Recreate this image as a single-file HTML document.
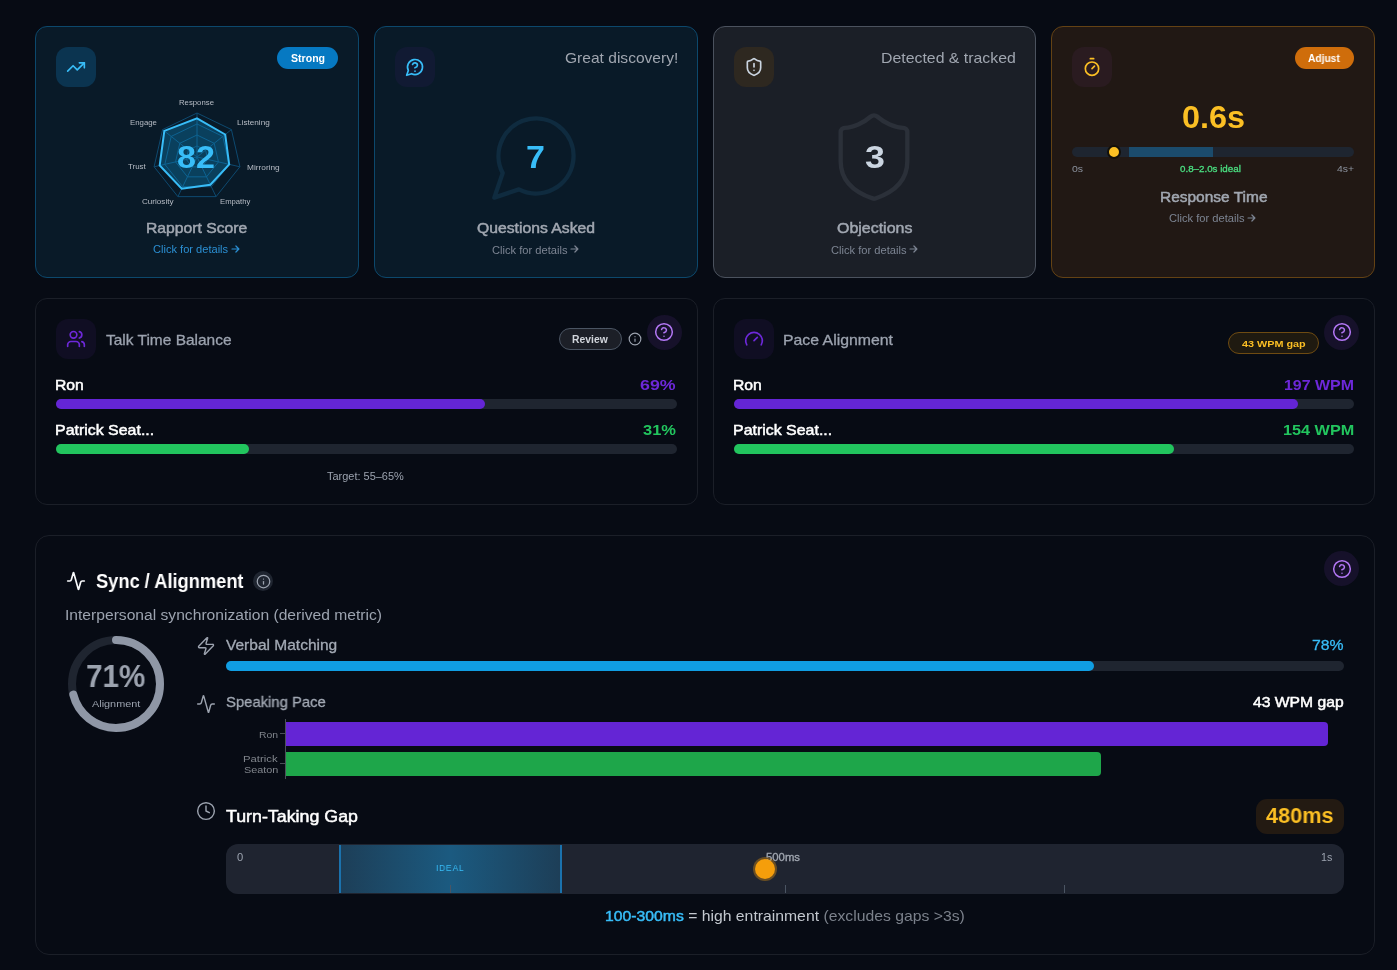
<!DOCTYPE html>
<html><head><meta charset="utf-8"><style>
html,body{margin:0;padding:0;background:#070b14;}
body{width:1397px;height:970px;overflow:hidden;background:#070b14;font-family:"Liberation Sans", sans-serif;position:relative;}
</style></head><body>
<div style="position:absolute;left:35px;top:26px;width:324px;height:252px;box-sizing:border-box;background:#091a28;border:1px solid #0c486c;border-radius:12px;"></div>
<div style="position:absolute;left:374px;top:26px;width:324px;height:252px;box-sizing:border-box;background:#091a28;border:1px solid #0c486c;border-radius:12px;"></div>
<div style="position:absolute;left:713px;top:26px;width:323px;height:252px;box-sizing:border-box;background:#1b1f27;border:1px solid #4b525e;border-radius:12px;"></div>
<div style="position:absolute;left:1051px;top:26px;width:324px;height:252px;box-sizing:border-box;background:#211814;border:1px solid #644214;border-radius:12px;"></div>
<div style="position:absolute;left:56px;top:47px;width:40px;height:40px;background:#0b3450;border-radius:12px;"></div>
<svg style="position:absolute;left:66.0px;top:57.0px;" width="20" height="20" viewBox="0 0 24 24" fill="none" stroke="#38bdf8" stroke-width="2" stroke-linecap="round" stroke-linejoin="round"><polyline points="22 7 13.5 15.5 8.5 10.5 2 17"/><polyline points="16 7 22 7 22 13"/></svg>
<div style="position:absolute;left:395px;top:47px;width:40px;height:40px;background:#111a33;border-radius:12px;"></div>
<svg style="position:absolute;left:405.0px;top:57.0px;" width="20" height="20" viewBox="0 0 24 24" fill="none" stroke="#38bdf8" stroke-width="2" stroke-linecap="round" stroke-linejoin="round"><path d="M7.9 20A9 9 0 1 0 4 16.1L2 22Z"/><path d="M9.09 9a3 3 0 0 1 5.83 1c0 2-3 3-3 3"/><path d="M12 17h.01"/></svg>
<div style="position:absolute;left:734px;top:47px;width:40px;height:40px;background:#2e2820;border-radius:12px;"></div>
<svg style="position:absolute;left:744.0px;top:57.0px;" width="20" height="20" viewBox="0 0 24 24" fill="none" stroke="#cbd5e1" stroke-width="2" stroke-linecap="round" stroke-linejoin="round"><path d="M20 13c0 5-3.5 7.5-7.66 8.95a1 1 0 0 1-.67-.01C7.5 20.5 4 18 4 13V6a1 1 0 0 1 1-1c2 0 4.5-1.2 6.24-2.72a1.17 1.17 0 0 1 1.52 0C14.51 3.81 17 5 19 5a1 1 0 0 1 1 1z"/><path d="M12 8v4"/><path d="M12 16h.01"/></svg>
<div style="position:absolute;left:1072px;top:47px;width:40px;height:40px;background:#2a1b20;border-radius:12px;"></div>
<svg style="position:absolute;left:1082.0px;top:57.0px;" width="20" height="20" viewBox="0 0 24 24" fill="none" stroke="#fbbf24" stroke-width="2" stroke-linecap="round" stroke-linejoin="round"><line x1="10" x2="14" y1="2" y2="2"/><line x1="12" x2="15" y1="14" y2="11"/><circle cx="12" cy="14" r="8"/></svg>
<div style="position:absolute;left:277px;top:47px;width:61px;height:22px;background:#0679c2;border-radius:11px;"></div>
<div class="t" style="position:absolute;left:290.50px;top:53.11px;font-size:10.5px;line-height:10.5px;font-weight:700;color:#ffffff;white-space:nowrap;will-change:transform;transform:scaleX(1.0064);transform-origin:left center;"><span id="t_strong">Strong</span></div>
<div style="position:absolute;left:1295px;top:47px;width:59px;height:22px;background:#cf6d0b;border-radius:11px;"></div>
<div class="t" style="position:absolute;left:1307.87px;top:53.28px;font-size:10.5px;line-height:10.5px;font-weight:700;color:#ffffff;white-space:nowrap;will-change:transform;transform:scaleX(0.9738);transform-origin:left center;"><span id="t_adjust">Adjust</span></div>
<svg style="position:absolute;left:0;top:0" width="1397" height="970"><polygon points="197.00,146.00 205.60,150.14 207.72,159.45 201.77,166.91 192.23,166.91 186.28,159.45 188.40,150.14" fill="none" stroke="#0e4a70" stroke-width="1"/><polygon points="197.00,135.00 214.20,143.28 218.45,161.90 206.55,176.82 187.45,176.82 175.55,161.90 179.80,143.28" fill="none" stroke="#0e4a70" stroke-width="1"/><polygon points="197.00,124.00 222.80,136.42 229.17,164.34 211.32,186.73 182.68,186.73 164.83,164.34 171.20,136.42" fill="none" stroke="#0e4a70" stroke-width="1"/><polygon points="197.00,113.00 231.40,129.57 239.90,166.79 216.09,196.64 177.91,196.64 154.10,166.79 162.60,129.57" fill="none" stroke="#0e4a70" stroke-width="1"/><line x1="197" y1="157" x2="197.00" y2="113.00" stroke="#0e4a70" stroke-width="1"/><line x1="197" y1="157" x2="231.40" y2="129.57" stroke="#0e4a70" stroke-width="1"/><line x1="197" y1="157" x2="239.90" y2="166.79" stroke="#0e4a70" stroke-width="1"/><line x1="197" y1="157" x2="216.09" y2="196.64" stroke="#0e4a70" stroke-width="1"/><line x1="197" y1="157" x2="177.91" y2="196.64" stroke="#0e4a70" stroke-width="1"/><line x1="197" y1="157" x2="154.10" y2="166.79" stroke="#0e4a70" stroke-width="1"/><line x1="197" y1="157" x2="162.60" y2="129.57" stroke="#0e4a70" stroke-width="1"/><polygon points="197.00,118.28 225.21,134.50 229.17,164.34 210.36,184.75 181.73,188.71 159.68,165.52 164.32,130.94" fill="rgba(14,165,233,0.28)" stroke="#38bdf8" stroke-width="2"/></svg>
<div class="t" style="position:absolute;left:179.28px;top:99.19px;font-size:7px;line-height:7px;font-weight:400;color:#b7bcc5;white-space:nowrap;will-change:transform;transform:scaleX(1.1086);transform-origin:left center;"><span id="r_resp">Response</span></div>
<div class="t" style="position:absolute;left:237.31px;top:119.45px;font-size:7px;line-height:7px;font-weight:400;color:#b7bcc5;white-space:nowrap;will-change:transform;transform:scaleX(1.1706);transform-origin:left center;"><span id="r_list">Listening</span></div>
<div class="t" style="position:absolute;left:129.74px;top:119.28px;font-size:7px;line-height:7px;font-weight:400;color:#b7bcc5;white-space:nowrap;will-change:transform;transform:scaleX(1.1173);transform-origin:left center;"><span id="r_eng">Engage</span></div>
<div class="t" style="position:absolute;left:247.15px;top:163.53px;font-size:7px;line-height:7px;font-weight:400;color:#b7bcc5;white-space:nowrap;will-change:transform;transform:scaleX(1.1844);transform-origin:left center;"><span id="r_mirr">Mirroring</span></div>
<div class="t" style="position:absolute;left:128.08px;top:163.34px;font-size:7px;line-height:7px;font-weight:400;color:#b7bcc5;white-space:nowrap;will-change:transform;transform:scaleX(1.1290);transform-origin:left center;"><span id="r_trust">Trust</span></div>
<div class="t" style="position:absolute;left:142.44px;top:198.02px;font-size:7px;line-height:7px;font-weight:400;color:#b7bcc5;white-space:nowrap;will-change:transform;transform:scaleX(1.1563);transform-origin:left center;"><span id="r_cur">Curiosity</span></div>
<div class="t" style="position:absolute;left:219.55px;top:197.89px;font-size:7px;line-height:7px;font-weight:400;color:#b7bcc5;white-space:nowrap;will-change:transform;transform:scaleX(1.0978);transform-origin:left center;"><span id="r_emp">Empathy</span></div>
<div class="t" style="position:absolute;left:177.35px;top:140.91px;font-size:32px;line-height:32px;font-weight:700;color:#38bdf8;white-space:nowrap;will-change:transform;transform:scaleX(1.0665);transform-origin:left center;"><span id="n82">82</span></div>
<div class="t" style="position:absolute;left:146.08px;top:219.76px;font-size:15px;line-height:15px;font-weight:400;color:#a1a7b1;white-space:nowrap;will-change:transform;-webkit-text-stroke-width:0.5px;transform:scaleX(1.0475);transform-origin:left center;"><span id="t_rapport">Rapport Score</span></div>
<div class="t" style="position:absolute;left:153.03px;top:244.56px;font-size:10px;line-height:10px;font-weight:400;color:#2b8fd3;white-space:nowrap;will-change:transform;transform:scaleX(1.1080);transform-origin:left center;"><span id="t_click1">Click for details</span></div>
<svg style="position:absolute;left:231px;top:244.1px" width="9.3" height="10" viewBox="0 0 9.3 10" fill="none" stroke="#2b8fd3" stroke-width="1.2" stroke-linecap="round" stroke-linejoin="round"><path d="M1 5H7.8999999999999995M4.8999999999999995 2L7.8999999999999995 5L4.8999999999999995 8"/></svg>
<svg style="position:absolute;left:485.79999999999995px;top:106.1px;" width="100" height="100" viewBox="0 0 24 24" fill="none" stroke="#0f2b3f" stroke-width="1.05" stroke-linecap="round" stroke-linejoin="round"><path d="M7.9 20A9 9 0 1 0 4 16.1L2 22Z"/></svg>
<div class="t" style="position:absolute;left:564.57px;top:50.00px;font-size:15px;line-height:15px;font-weight:400;color:#a0a6b0;white-space:nowrap;will-change:transform;transform:scaleX(1.0375);transform-origin:left center;"><span id="t_great">Great discovery!</span></div>
<div class="t" style="position:absolute;left:526.09px;top:140.91px;font-size:32px;line-height:32px;font-weight:700;color:#38bdf8;white-space:nowrap;will-change:transform;transform:scaleX(1.0631);transform-origin:left center;"><span id="n7">7</span></div>
<div class="t" style="position:absolute;left:476.70px;top:219.97px;font-size:15px;line-height:15px;font-weight:400;color:#a1a7b1;white-space:nowrap;will-change:transform;-webkit-text-stroke-width:0.5px;transform:scaleX(1.0486);transform-origin:left center;"><span id="t_quest">Questions Asked</span></div>
<div class="t" style="position:absolute;left:492.19px;top:245.52px;font-size:10px;line-height:10px;font-weight:400;color:#7d8593;white-space:nowrap;will-change:transform;transform:scaleX(1.1130);transform-origin:left center;"><span id="t_click2">Click for details</span></div>
<svg style="position:absolute;left:569.9px;top:244.3px" width="9.3" height="10" viewBox="0 0 9.3 10" fill="none" stroke="#7d8593" stroke-width="1.2" stroke-linecap="round" stroke-linejoin="round"><path d="M1 5H7.8999999999999995M4.8999999999999995 2L7.8999999999999995 5L4.8999999999999995 8"/></svg>
<svg style="position:absolute;left:824.0px;top:107.0px;" width="100" height="100" viewBox="0 0 24 24" fill="none" stroke="#2b3039" stroke-width="1.05" stroke-linecap="round" stroke-linejoin="round"><path d="M20 13c0 5-3.5 7.5-7.66 8.95a1 1 0 0 1-.67-.01C7.5 20.5 4 18 4 13V6a1 1 0 0 1 1-1c2 0 4.5-1.2 6.24-2.72a1.17 1.17 0 0 1 1.52 0C14.51 3.81 17 5 19 5a1 1 0 0 1 1 1z"/></svg>
<div class="t" style="position:absolute;left:881.12px;top:50.00px;font-size:15px;line-height:15px;font-weight:400;color:#a0a6b0;white-space:nowrap;will-change:transform;transform:scaleX(1.0568);transform-origin:left center;"><span id="t_detect">Detected &amp; tracked</span></div>
<div class="t" style="position:absolute;left:864.58px;top:140.96px;font-size:32px;line-height:32px;font-weight:700;color:#cbd5e1;white-space:nowrap;will-change:transform;transform:scaleX(1.1180);transform-origin:left center;"><span id="n3">3</span></div>
<div class="t" style="position:absolute;left:836.62px;top:219.85px;font-size:15px;line-height:15px;font-weight:400;color:#a1a7b1;white-space:nowrap;will-change:transform;-webkit-text-stroke-width:0.5px;transform:scaleX(1.0638);transform-origin:left center;"><span id="t_obj">Objections</span></div>
<div class="t" style="position:absolute;left:830.66px;top:245.52px;font-size:10px;line-height:10px;font-weight:400;color:#7d8593;white-space:nowrap;will-change:transform;transform:scaleX(1.1128);transform-origin:left center;"><span id="t_click3">Click for details</span></div>
<svg style="position:absolute;left:908.5px;top:244.3px" width="9.3" height="10" viewBox="0 0 9.3 10" fill="none" stroke="#7d8593" stroke-width="1.2" stroke-linecap="round" stroke-linejoin="round"><path d="M1 5H7.8999999999999995M4.8999999999999995 2L7.8999999999999995 5L4.8999999999999995 8"/></svg>
<div class="t" style="position:absolute;left:1182.19px;top:100.81px;font-size:32px;line-height:32px;font-weight:700;color:#fbbf24;white-space:nowrap;will-change:transform;transform:scaleX(1.0132);transform-origin:left center;"><span id="n06">0.6s</span></div>
<div style="position:absolute;left:1072px;top:147px;width:282px;height:10px;background:#1e2530;border-radius:5px;"></div>
<div style="position:absolute;left:1128.5px;top:147px;width:84.5px;height:10px;background:#1b4b6c;"></div>
<div style="position:absolute;left:1107.4px;top:145px;width:14px;height:14px;box-sizing:border-box;background:#fbbf24;border:2px solid #120f0a;border-radius:50%;"></div>
<div class="t" style="position:absolute;left:1071.85px;top:164.72px;font-size:9px;line-height:9px;font-weight:400;color:#8b929e;white-space:nowrap;will-change:transform;transform:scaleX(1.1680);transform-origin:left center;"><span id="t_0s">0s</span></div>
<div class="t" style="position:absolute;left:1180.23px;top:164.82px;font-size:9px;line-height:9px;font-weight:400;color:#4ade80;white-space:nowrap;will-change:transform;-webkit-text-stroke-width:0.3px;transform:scaleX(1.0852);transform-origin:left center;"><span id="t_ideal">0.8–2.0s ideal</span></div>
<div class="t" style="position:absolute;left:1337.08px;top:164.64px;font-size:9px;line-height:9px;font-weight:400;color:#8b929e;white-space:nowrap;will-change:transform;transform:scaleX(1.1576);transform-origin:left center;"><span id="t_4s">4s+</span></div>
<div class="t" style="position:absolute;left:1159.51px;top:188.76px;font-size:15px;line-height:15px;font-weight:400;color:#a1a7b1;white-space:nowrap;will-change:transform;-webkit-text-stroke-width:0.5px;transform:scaleX(1.0315);transform-origin:left center;"><span id="t_resp">Response Time</span></div>
<div class="t" style="position:absolute;left:1169.01px;top:213.82px;font-size:10px;line-height:10px;font-weight:400;color:#7d8593;white-space:nowrap;will-change:transform;transform:scaleX(1.1130);transform-origin:left center;"><span id="t_click4">Click for details</span></div>
<svg style="position:absolute;left:1247.4px;top:212.5px" width="9.3" height="10" viewBox="0 0 9.3 10" fill="none" stroke="#7d8593" stroke-width="1.2" stroke-linecap="round" stroke-linejoin="round"><path d="M1 5H7.8999999999999995M4.8999999999999995 2L7.8999999999999995 5L4.8999999999999995 8"/></svg>
<div style="position:absolute;left:35px;top:298px;width:663px;height:207px;box-sizing:border-box;background:#070b14;border:1px solid #1b1f28;border-radius:12px;"></div>
<div style="position:absolute;left:713px;top:298px;width:662px;height:207px;box-sizing:border-box;background:#070b14;border:1px solid #1b1f28;border-radius:12px;"></div>
<div style="position:absolute;left:56px;top:319px;width:40px;height:40px;background:#100e23;border-radius:12px;"></div>
<svg style="position:absolute;left:66.0px;top:329.0px;" width="20" height="20" viewBox="0 0 24 24" fill="none" stroke="#6d28d9" stroke-width="2" stroke-linecap="round" stroke-linejoin="round"><path d="M16 21v-2a4 4 0 0 0-4-4H6a4 4 0 0 0-4 4v2"/><circle cx="9" cy="7" r="4"/><path d="M22 21v-2a4 4 0 0 0-3-3.87"/><path d="M16 3.13a4 4 0 0 1 0 7.75"/></svg>
<div class="t" style="position:absolute;left:106.44px;top:332.05px;font-size:15px;line-height:15px;font-weight:400;color:#9ca3af;white-space:nowrap;will-change:transform;-webkit-text-stroke-width:0.3px;transform:scaleX(1.0314);transform-origin:left center;"><span id="t_talk">Talk Time Balance</span></div>
<div style="position:absolute;left:559px;top:328px;width:63px;height:22px;box-sizing:border-box;background:#1c1f27;border:1px solid #4b5563;border-radius:11px;"></div>
<div class="t" style="position:absolute;left:572.04px;top:334.54px;font-size:10px;line-height:10px;font-weight:700;color:#d1d5db;white-space:nowrap;will-change:transform;transform:scaleX(1.0365);transform-origin:left center;"><span id="t_review">Review</span></div>
<svg style="position:absolute;left:627.5px;top:332.0px;" width="14" height="14" viewBox="0 0 24 24" fill="none" stroke="#9ca3af" stroke-width="2" stroke-linecap="round" stroke-linejoin="round"><circle cx="12" cy="12" r="10"/><path d="M12 16v-4"/><path d="M12 8h.01"/></svg>
<div style="position:absolute;left:646.5px;top:314.5px;width:35px;height:35px;background:#16112a;border-radius:50%;"></div>
<svg style="position:absolute;left:654.0px;top:322.0px;" width="20" height="20" viewBox="0 0 24 24" fill="none" stroke="#b377f5" stroke-width="1.8" stroke-linecap="round" stroke-linejoin="round"><circle cx="12" cy="12" r="10"/><path d="M9.09 9a3 3 0 0 1 5.83 1c0 2-3 3-3 3"/><path d="M12 17h.01"/></svg>
<div class="t" style="position:absolute;left:55.34px;top:377.70px;font-size:14.5px;line-height:14.5px;font-weight:400;color:#ffffff;white-space:nowrap;will-change:transform;-webkit-text-stroke-width:0.5px;transform:scaleX(1.0841);transform-origin:left center;"><span id="t_ron1">Ron</span></div>
<div class="t" style="position:absolute;left:640.36px;top:377.20px;font-size:15px;line-height:15px;font-weight:700;color:#6d28d9;white-space:nowrap;will-change:transform;transform:scaleX(1.1858);transform-origin:left center;"><span id="t_69">69%</span></div>
<div style="position:absolute;left:56px;top:399px;width:621px;height:10px;background:#1f2530;border-radius:5px;"></div>
<div style="position:absolute;left:56px;top:399px;width:428.5px;height:10px;background:#6425d5;border-radius:5px;"></div>
<div class="t" style="position:absolute;left:55.31px;top:423.10px;font-size:14.5px;line-height:14.5px;font-weight:400;color:#ffffff;white-space:nowrap;will-change:transform;-webkit-text-stroke-width:0.5px;transform:scaleX(1.0989);transform-origin:left center;"><span id="t_pat1">Patrick Seat...</span></div>
<div class="t" style="position:absolute;left:642.59px;top:422.30px;font-size:15px;line-height:15px;font-weight:700;color:#22c55e;white-space:nowrap;will-change:transform;transform:scaleX(1.0976);transform-origin:left center;"><span id="t_31">31%</span></div>
<div style="position:absolute;left:56px;top:444px;width:621px;height:10px;background:#1f2530;border-radius:5px;"></div>
<div style="position:absolute;left:56px;top:444px;width:192.5px;height:10px;background:#22c55e;border-radius:5px;"></div>
<div class="t" style="position:absolute;left:327.24px;top:471.84px;font-size:10px;line-height:10px;font-weight:400;color:#9ca3af;white-space:nowrap;will-change:transform;transform:scaleX(1.0966);transform-origin:left center;"><span id="t_target">Target: 55–65%</span></div>
<div style="position:absolute;left:734px;top:319px;width:40px;height:40px;background:#100e23;border-radius:12px;"></div>
<svg style="position:absolute;left:744.0px;top:329.0px;" width="20" height="20" viewBox="0 0 24 24" fill="none" stroke="#6d28d9" stroke-width="2" stroke-linecap="round" stroke-linejoin="round"><path d="m12 14 4-4"/><path d="M3.34 19a10 10 0 1 1 17.32 0"/></svg>
<div class="t" style="position:absolute;left:782.52px;top:332.07px;font-size:15px;line-height:15px;font-weight:400;color:#9ca3af;white-space:nowrap;will-change:transform;-webkit-text-stroke-width:0.3px;transform:scaleX(1.0551);transform-origin:left center;"><span id="t_pace">Pace Alignment</span></div>
<div style="position:absolute;left:1228px;top:332px;width:91px;height:22px;box-sizing:border-box;background:#1f1a10;border:1px solid #6e4b12;border-radius:11px;"></div>
<div class="t" style="position:absolute;left:1242.17px;top:338.70px;font-size:9.8px;line-height:9.8px;font-weight:700;color:#fbbf24;white-space:nowrap;will-change:transform;transform:scaleX(1.1044);transform-origin:left center;"><span id="t_43badge">43 WPM gap</span></div>
<div style="position:absolute;left:1324px;top:314.5px;width:35px;height:35px;background:#16112a;border-radius:50%;"></div>
<svg style="position:absolute;left:1331.5px;top:322.0px;" width="20" height="20" viewBox="0 0 24 24" fill="none" stroke="#b377f5" stroke-width="1.8" stroke-linecap="round" stroke-linejoin="round"><circle cx="12" cy="12" r="10"/><path d="M9.09 9a3 3 0 0 1 5.83 1c0 2-3 3-3 3"/><path d="M12 17h.01"/></svg>
<div class="t" style="position:absolute;left:733.30px;top:377.70px;font-size:14.5px;line-height:14.5px;font-weight:400;color:#ffffff;white-space:nowrap;will-change:transform;-webkit-text-stroke-width:0.5px;transform:scaleX(1.0841);transform-origin:left center;"><span id="t_ron2">Ron</span></div>
<div class="t" style="position:absolute;left:1284.31px;top:377.20px;font-size:15px;line-height:15px;font-weight:700;color:#6d28d9;white-space:nowrap;will-change:transform;transform:scaleX(1.0636);transform-origin:left center;"><span id="t_197">197 WPM</span></div>
<div style="position:absolute;left:734px;top:399px;width:620px;height:10px;background:#1f2530;border-radius:5px;"></div>
<div style="position:absolute;left:734px;top:399px;width:564px;height:10px;background:#6425d5;border-radius:5px;"></div>
<div class="t" style="position:absolute;left:733.31px;top:423.10px;font-size:14.5px;line-height:14.5px;font-weight:400;color:#ffffff;white-space:nowrap;will-change:transform;-webkit-text-stroke-width:0.5px;transform:scaleX(1.0989);transform-origin:left center;"><span id="t_pat2">Patrick Seat...</span></div>
<div class="t" style="position:absolute;left:1283.26px;top:422.30px;font-size:15px;line-height:15px;font-weight:700;color:#22c55e;white-space:nowrap;will-change:transform;transform:scaleX(1.0814);transform-origin:left center;"><span id="t_154">154 WPM</span></div>
<div style="position:absolute;left:734px;top:444px;width:620px;height:10px;background:#1f2530;border-radius:5px;"></div>
<div style="position:absolute;left:734px;top:444px;width:440px;height:10px;background:#22c55e;border-radius:5px;"></div>
<div style="position:absolute;left:35px;top:535px;width:1340px;height:420px;box-sizing:border-box;background:#070b14;border:1px solid #1b1f28;border-radius:14px;"></div>
<svg style="position:absolute;left:66.0px;top:571.0px;" width="20" height="20" viewBox="0 0 24 24" fill="none" stroke="#f9fafb" stroke-width="2" stroke-linecap="round" stroke-linejoin="round"><path d="M22 12h-2.48a2 2 0 0 0-1.93 1.46l-2.35 8.36a.25.25 0 0 1-.48 0L9.24 2.18a.25.25 0 0 0-.48 0l-2.35 8.36A2 2 0 0 1 4.49 12H2"/></svg>
<div class="t" style="position:absolute;left:95.88px;top:571.10px;font-size:20px;line-height:20px;font-weight:700;color:#ffffff;white-space:nowrap;will-change:transform;transform:scaleX(0.9133);transform-origin:left center;"><span id="t_sync">Sync / Alignment</span></div>
<div style="position:absolute;left:253px;top:571px;width:20px;height:20px;background:#1f2530;border-radius:50%;"></div>
<svg style="position:absolute;left:255.8px;top:573.7px;" width="15" height="15" viewBox="0 0 24 24" fill="none" stroke="#9ca3af" stroke-width="2" stroke-linecap="round" stroke-linejoin="round"><circle cx="12" cy="12" r="10"/><path d="M12 16v-4"/><path d="M12 8h.01"/></svg>
<div style="position:absolute;left:1324px;top:551px;width:35px;height:35px;background:#16112a;border-radius:50%;"></div>
<svg style="position:absolute;left:1331.5px;top:558.5px;" width="20" height="20" viewBox="0 0 24 24" fill="none" stroke="#b377f5" stroke-width="1.8" stroke-linecap="round" stroke-linejoin="round"><circle cx="12" cy="12" r="10"/><path d="M9.09 9a3 3 0 0 1 5.83 1c0 2-3 3-3 3"/><path d="M12 17h.01"/></svg>
<div class="t" style="position:absolute;left:64.67px;top:607.98px;font-size:14px;line-height:14px;font-weight:400;color:#9ca3af;white-space:nowrap;will-change:transform;transform:scaleX(1.1162);transform-origin:left center;"><span id="t_inter">Interpersonal synchronization (derived metric)</span></div>
<svg style="position:absolute;left:68.2px;top:635.7px" width="96" height="96" viewBox="0 0 96 96"><circle cx="48" cy="48" r="44" fill="none" stroke="#1f2530" stroke-width="8"/><circle cx="48" cy="48" r="44" fill="none" stroke="#8f97a6" stroke-width="8" stroke-linecap="round" stroke-dasharray="196.29 276.46" transform="rotate(-90 48 48)"/></svg>
<div class="t" style="position:absolute;left:86.08px;top:659.91px;font-size:32px;line-height:32px;font-weight:700;color:#9ca3af;white-space:nowrap;will-change:transform;transform:scaleX(0.9271);transform-origin:left center;"><span id="t_71">71%</span></div>
<div class="t" style="position:absolute;left:92.16px;top:698.85px;font-size:9.5px;line-height:9.5px;font-weight:400;color:#9ca3af;white-space:nowrap;will-change:transform;transform:scaleX(1.1428);transform-origin:left center;"><span id="t_alig">Alignment</span></div>
<svg style="position:absolute;left:196.0px;top:636.0px;" width="20" height="20" viewBox="0 0 24 24" fill="none" stroke="#9ca3af" stroke-width="1.7" stroke-linecap="round" stroke-linejoin="round"><path d="M4 14a1 1 0 0 1-.78-1.63l9.9-10.2a.5.5 0 0 1 .86.46l-1.92 6.02A1 1 0 0 0 13 10h7a1 1 0 0 1 .78 1.63l-9.9 10.2a.5.5 0 0 1-.86-.46l1.92-6.02A1 1 0 0 0 11 14z"/></svg>
<div class="t" style="position:absolute;left:226.19px;top:636.76px;font-size:15px;line-height:15px;font-weight:400;color:#a3aab5;white-space:nowrap;will-change:transform;-webkit-text-stroke-width:0.3px;transform:scaleX(1.0338);transform-origin:left center;"><span id="t_verbal">Verbal Matching</span></div>
<div class="t" style="position:absolute;left:1311.80px;top:637.37px;font-size:15px;line-height:15px;font-weight:400;color:#38bdf8;white-space:nowrap;will-change:transform;-webkit-text-stroke-width:0.3px;transform:scaleX(1.0510);transform-origin:left center;"><span id="t_78">78%</span></div>
<div style="position:absolute;left:226px;top:661px;width:1118px;height:10px;background:#1f2530;border-radius:5px;"></div>
<div style="position:absolute;left:226px;top:661px;width:868px;height:10px;background:#109ee3;border-radius:5px;"></div>
<svg style="position:absolute;left:196.0px;top:694.0px;" width="20" height="20" viewBox="0 0 24 24" fill="none" stroke="#9ca3af" stroke-width="1.7" stroke-linecap="round" stroke-linejoin="round"><path d="M22 12h-2.48a2 2 0 0 0-1.93 1.46l-2.35 8.36a.25.25 0 0 1-.48 0L9.24 2.18a.25.25 0 0 0-.48 0l-2.35 8.36A2 2 0 0 1 4.49 12H2"/></svg>
<div class="t" style="position:absolute;left:225.56px;top:693.78px;font-size:15px;line-height:15px;font-weight:400;color:#a3aab5;white-space:nowrap;will-change:transform;-webkit-text-stroke-width:0.3px;transform:scaleX(0.9892);transform-origin:left center;"><span id="t_speak">Speaking Pace</span></div>
<div class="t" style="position:absolute;left:1253.47px;top:693.68px;font-size:15px;line-height:15px;font-weight:400;color:#ffffff;white-space:nowrap;will-change:transform;-webkit-text-stroke-width:0.5px;transform:scaleX(1.0449);transform-origin:left center;"><span id="t_43gap">43 WPM gap</span></div>
<div style="position:absolute;left:285px;top:719px;width:1px;height:60px;background:#4b5058;"></div>
<div style="position:absolute;left:280px;top:733px;width:6px;height:1px;background:#4b5058;"></div>
<div style="position:absolute;left:280px;top:763px;width:6px;height:1px;background:#4b5058;"></div>
<div class="t" style="position:absolute;left:258.87px;top:730.11px;font-size:9.5px;line-height:9.5px;font-weight:400;color:#80858c;white-space:nowrap;will-change:transform;transform:scaleX(1.0959);transform-origin:left center;"><span id="t_ronax">Ron</span></div>
<div class="t" style="position:absolute;left:243.43px;top:754.39px;font-size:9.5px;line-height:9.5px;font-weight:400;color:#80858c;white-space:nowrap;will-change:transform;transform:scaleX(1.1910);transform-origin:left center;"><span id="t_patax">Patrick</span></div>
<div class="t" style="position:absolute;left:243.90px;top:765.31px;font-size:9.5px;line-height:9.5px;font-weight:400;color:#80858c;white-space:nowrap;will-change:transform;transform:scaleX(1.1426);transform-origin:left center;"><span id="t_seaax">Seaton</span></div>
<div style="position:absolute;left:286px;top:722px;width:1042px;height:24px;background:#6425d5;border-radius:0 4px 4px 0;"></div>
<div style="position:absolute;left:286px;top:752px;width:815px;height:24px;background:#1ea64a;border-radius:0 4px 4px 0;"></div>
<svg style="position:absolute;left:196.0px;top:801.0px;" width="20" height="20" viewBox="0 0 24 24" fill="none" stroke="#9ca3af" stroke-width="1.7" stroke-linecap="round" stroke-linejoin="round"><circle cx="12" cy="12" r="10"/><polyline points="12 6 12 12 16 14"/></svg>
<div class="t" style="position:absolute;left:226.43px;top:808.09px;font-size:17px;line-height:17px;font-weight:400;color:#ffffff;white-space:nowrap;will-change:transform;-webkit-text-stroke-width:0.5px;transform:scaleX(1.0472);transform-origin:left center;"><span id="t_turn">Turn-Taking Gap</span></div>
<div style="position:absolute;left:1256px;top:799px;width:88px;height:35px;background:#231a12;border-radius:11px;"></div>
<div class="t" style="position:absolute;left:1266.49px;top:805.28px;font-size:22px;line-height:22px;font-weight:700;color:#fbbf24;white-space:nowrap;will-change:transform;transform:scaleX(0.9862);transform-origin:left center;"><span id="t_480">480ms</span></div>
<div style="position:absolute;left:226px;top:844px;width:1118px;height:50px;background:#1f2430;border-radius:12px;"></div>
<div style="position:absolute;left:339px;top:845px;width:223px;height:48px;background:linear-gradient(90deg,#1d3e57,#1b5a80 50%,#1d3e57);"></div>
<div style="position:absolute;left:339px;top:845px;width:2px;height:48px;background:#1b72ad;"></div>
<div style="position:absolute;left:560px;top:845px;width:2px;height:48px;background:#1b72ad;"></div>
<div class="t" style="position:absolute;left:435.65px;top:864.49px;font-size:9px;line-height:9px;font-weight:400;color:#38bdf8;white-space:nowrap;will-change:transform;letter-spacing:0.8px;transform:scaleX(0.9435);transform-origin:left center;"><span id="t_ideal2">IDEAL</span></div>
<div style="position:absolute;left:450px;top:885px;width:1px;height:8px;background:#4b5563;"></div>
<div style="position:absolute;left:785px;top:885px;width:1px;height:8px;background:#4b5563;"></div>
<div style="position:absolute;left:1064px;top:885px;width:1px;height:8px;background:#4b5563;"></div>
<div class="t" style="position:absolute;left:236.58px;top:852.64px;font-size:10px;line-height:10px;font-weight:400;color:#9ca3af;white-space:nowrap;will-change:transform;transform:scaleX(1.1190);transform-origin:left center;"><span id="t_0">0</span></div>
<div class="t" style="position:absolute;left:766.24px;top:853.01px;font-size:10px;line-height:10px;font-weight:400;color:#a0a6b0;white-space:nowrap;will-change:transform;-webkit-text-stroke-width:0.3px;transform:scaleX(1.1329);transform-origin:left center;"><span id="t_500">500ms</span></div>
<div class="t" style="position:absolute;left:1321.41px;top:852.55px;font-size:10px;line-height:10px;font-weight:400;color:#9ca3af;white-space:nowrap;will-change:transform;transform:scaleX(1.0658);transform-origin:left center;"><span id="t_1s">1s</span></div>
<div style="position:absolute;left:755px;top:859px;width:20px;height:20px;background:#f59e0b;border-radius:50%;box-shadow:0 0 0 2px rgba(245,158,11,0.35);"></div>
<div style="position:absolute;left:0;top:0;width:1397px;text-align:center"></div>
<div class="t" style="position:absolute;left:604.86px;top:907.50px;font-size:15px;line-height:15px;font-weight:400;color:#c3c8cf;white-space:nowrap;will-change:transform;transform:scaleX(1.0497);transform-origin:left center;"><span id="t_bottom"><span style="color:#38bdf8;-webkit-text-stroke-width:0.5px">100-300ms</span><span style="color:#c3c8cf"> = high entrainment </span><span style="color:#7b818b">(excludes gaps &gt;3s)</span></span></div>
</body></html>
